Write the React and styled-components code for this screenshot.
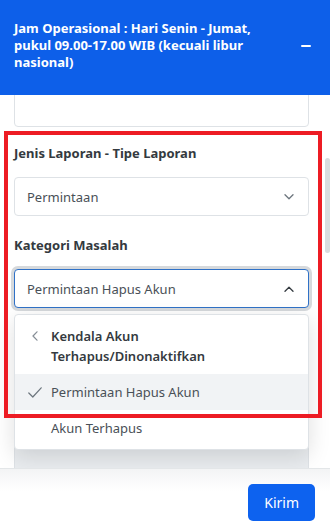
import React, { useLayoutEffect, useRef } from 'react';
import styled, { createGlobalStyle } from 'styled-components';

const Global = createGlobalStyle`
  html, body { margin: 0; padding: 0; background: #fff; }
  body { font-family: "Noto Sans", "Open Sans", sans-serif; }
  * { box-sizing: border-box; }
`;

const Page = styled.div`
  width: 330px;
  height: 529px;
  display: flex;
  flex-direction: column;
  overflow: hidden;
  background: #fff;
`;

const Header = styled.header`
  flex: none;
  height: 95px;
  background: #0d5fe9;
  color: #fff;
  display: flex;
  align-items: center;
  justify-content: space-between;
  padding: 0 19px 4px 14px;
  gap: 12px;
`;

const HeaderText = styled.p`
  margin: 0;
  font-size: 13px;
  font-weight: 700;
  line-height: 17px;
  max-width: 272px;
`;

const MinusIcon = styled.span`
  flex: none;
  width: 10px;
  height: 2px;
  border-radius: 1px;
  background: #fff;
`;

const Body = styled.div`
  position: relative;
  flex: 1;
  min-height: 0;
`;

const Scroller = styled.div`
  height: 100%;
  overflow: hidden;
`;

const Content = styled.div`
  position: relative;
  padding: 16px 21px 40px 14px;
`;

const Thumb = styled.div`
  position: absolute;
  right: 0;
  top: 63px;
  width: 5px;
  height: 95px;
  border-radius: 3px;
  background: #d9dcdf;
`;

const Field = styled.div`
  position: relative;
  margin-bottom: ${(p) => p.$mb ?? 19}px;
`;

const Label = styled.label`
  display: block;
  font-size: 13px;
  font-weight: 700;
  line-height: 20px;
  color: #343a40;
  margin-bottom: 14px;
`;

const TextArea = styled.div`
  height: ${(p) => p.$h}px;
  border: 1px solid #dee2e6;
  border-radius: 4px;
  background: ${(p) => (p.$disabled ? '#e9ecef' : '#fff')};
`;

const Group = styled.div`
  position: relative;
  padding-top: 12px;
`;

const Highlight = styled.div`
  position: absolute;
  top: 0;
  left: -10px;
  right: -13px;
  height: 287px;
  border: 4px solid #ed1c24;
  z-index: 3;
  pointer-events: none;
`;

const Select = styled.div`
  height: 39px;
  display: flex;
  align-items: center;
  justify-content: space-between;
  padding: 0 14px 0 12px;
  border: 1px solid ${(p) => (p.$focus ? '#2f71c7' : '#dee2e6')};
  border-radius: 4px;
  background: #fff;
  box-shadow: ${(p) => (p.$focus ? '0 0 0 3px #d6d9dc' : 'none')};
  font-size: 13px;
  color: #495057;
`;

const Menu = styled.div`
  position: absolute;
  top: calc(100% + 6px);
  left: 0;
  right: 0;
  z-index: 2;
  padding: 3px 0;
  background: #fff;
  border: 1px solid #dee2e6;
  border-radius: 4px;
  box-shadow: 0 6px 22px rgba(0, 0, 0, 0.13);
`;

const MenuItem = styled.div`
  display: grid;
  grid-template-columns: 16px 1fr;
  column-gap: 8px;
  padding: 8px 12px;
  font-size: 13px;
  line-height: 20px;
  font-weight: ${(p) => (p.$group ? 600 : 400)};
  color: ${(p) => (p.$group ? '#343a40' : '#495057')};
  background: ${(p) => (p.$active ? '#f1f3f5' : 'transparent')};
`;

const IconCell = styled.span`
  height: 20px;
  display: flex;
  align-items: center;
  justify-content: center;
`;

const Footer = styled.footer`
  flex: none;
  height: 61px;
  position: relative;
  z-index: 4;
  display: flex;
  justify-content: flex-end;
  align-items: flex-start;
  padding: 15px 15px 0;
  border-top: 1px solid #e3e6e8;
  background: linear-gradient(#f3f4f5, #fff 22px);
`;

const Button = styled.button`
  height: 37px;
  padding: 0 16px;
  border: none;
  border-radius: 5px;
  background: #0d62ef;
  color: #fff;
  font-family: "Noto Sans", "Open Sans", sans-serif;
  font-size: 14px;
`;

const Chevron = ({ up, color }) => (
  <svg width="10" height="6" viewBox="0 0 10 6" fill="none">
    <path
      d={up ? 'M1 5.2 L5 1.2 L9 5.2' : 'M1 0.8 L5 4.8 L9 0.8'}
      stroke={color}
      strokeWidth="1.3"
      strokeLinecap="round"
      strokeLinejoin="round"
    />
  </svg>
);

const BackIcon = () => (
  <svg width="6" height="10" viewBox="0 0 6 10" fill="none">
    <path d="M5 0.8 L1 5 L5 9.2" stroke="#868e96" strokeWidth="1.2" strokeLinecap="round" strokeLinejoin="round" />
  </svg>
);

const CheckIcon = () => (
  <svg width="14" height="11" viewBox="0 0 14 11" fill="none">
    <path d="M0.8 6 L4.8 10 L13.2 0.8" stroke="#6c757d" strokeWidth="1.2" strokeLinecap="round" strokeLinejoin="round" />
  </svg>
);

export default function App() {
  const scrollRef = useRef(null);
  const groupRef = useRef(null);

  useLayoutEffect(() => {
    if (scrollRef.current && groupRef.current) {
      scrollRef.current.scrollTop = groupRef.current.offsetTop - 36;
    }
  }, []);

  return (
    <Page>
      <Global />
      <Header>
        <HeaderText>
          Jam Operasional : Hari Senin - Jumat, pukul 09.00-17.00 WIB (kecuali libur nasional)
        </HeaderText>
        <MinusIcon />
      </Header>
      <Body>
        <Scroller ref={scrollRef}>
          <Content>
            <Field $mb={4}>
              <TextArea $h={110} />
            </Field>
            <Group ref={groupRef}>
              <Highlight />
              <Field>
                <Label>Jenis Laporan - Tipe Laporan</Label>
                <Select>
                  <span>Permintaan</span>
                  <Chevron color="#6c757d" />
                </Select>
              </Field>
              <Field>
                <Label>Kategori Masalah</Label>
                <Select $focus>
                  <span>Permintaan Hapus Akun</span>
                  <Chevron up color="#343a40" />
                </Select>
                <Menu>
                  <MenuItem $group>
                    <IconCell><BackIcon /></IconCell>
                    <span>Kendala Akun Terhapus/Dinonaktifkan</span>
                  </MenuItem>
                  <MenuItem $active>
                    <IconCell><CheckIcon /></IconCell>
                    <span>Permintaan Hapus Akun</span>
                  </MenuItem>
                  <MenuItem>
                    <IconCell />
                    <span>Akun Terhapus</span>
                  </MenuItem>
                </Menu>
              </Field>
            </Group>
            <Field>
              <TextArea $h={180} $disabled />
            </Field>
          </Content>
        </Scroller>
        <Thumb />
      </Body>
      <Footer>
        <Button>Kirim</Button>
      </Footer>
    </Page>
  );
}
